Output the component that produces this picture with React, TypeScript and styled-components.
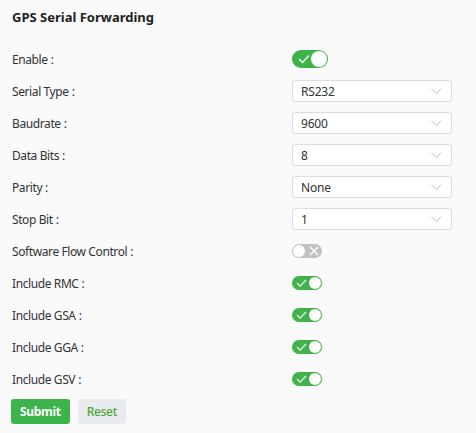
import React from "react";
import styled, { createGlobalStyle } from "styled-components";

const Global = createGlobalStyle`
  html, body { margin: 0; padding: 0; background: #fafafa; }
  body { font-family: "Noto Sans", "Noto Sans CJK SC", sans-serif; color: #333; }
`;

const Page = styled.div`
  padding: 8px 12px 10px 12px;
`;

const Title = styled.h2`
  margin: 0 0 17px 0;
  font-size: 13px;
  font-weight: 700;
  line-height: 18px;
  color: #222;
`;

const Row = styled.div`
  display: grid;
  grid-template-columns: 280px 160px;
  align-items: center;
  height: 32px;
`;

const Label = styled.div`
  font-size: 12px;
  letter-spacing: -0.4px;
  color: #333;
  white-space: nowrap;
`;

const Colon = styled.span`
  margin-left: 3px;
`;

const SelectBox = styled.div`
  box-sizing: border-box;
  height: 22px;
  border: 1px solid #dcdde3;
  border-radius: 3px;
  background: #fff;
  display: flex;
  align-items: center;
  justify-content: space-between;
  padding: 0 9px 0 8px;
  font-size: 12px;
  letter-spacing: -0.2px;
  color: #333;
`;

const Track = styled.div<{ $on: boolean; $big?: boolean }>`
  position: relative;
  box-sizing: border-box;
  width: ${(p) => (p.$big ? 36 : 30)}px;
  height: ${(p) => (p.$big ? 18 : 14)}px;
  border-radius: 9px;
  background: ${(p) => (p.$on ? "#3cb44a" : "#c2c2c2")};
`;

const Knob = styled.div<{ $on: boolean; $big?: boolean }>`
  position: absolute;
  top: 1px;
  ${(p) => (p.$on ? "right: 1px;" : "left: 1px;")}
  width: ${(p) => (p.$big ? 16 : 12)}px;
  height: ${(p) => (p.$big ? 16 : 12)}px;
  border-radius: 50%;
  background: #fff;
`;

const Mark = styled.svg<{ $on: boolean; $big?: boolean }>`
  position: absolute;
  top: 50%;
  transform: translateY(-50%);
  ${(p) => (p.$on ? `left: ${p.$big ? 6 : 4}px;` : "right: 3px;")}
`;

const Buttons = styled.div`
  display: flex;
  gap: 8px;
  margin-top: 4px;
  margin-left: -1px;
`;

const Button = styled.button<{ $primary?: boolean }>`
  height: 25px;
  padding: 0 9px;
  border: none;
  border-radius: 3px;
  font-family: inherit;
  font-size: 12px;
  letter-spacing: -0.3px;
  font-weight: 700;
  cursor: pointer;
  background: ${(p) => (p.$primary ? "#3cb44a" : "#e9ebef")};
  color: ${(p) => (p.$primary ? "#fff" : "#4aa63c")};
`;

const ResetButton = styled(Button)`
  font-weight: 500;
`;

function Toggle({ on, big }: { on: boolean; big?: boolean }) {
  return (
    <Track $on={on} $big={big}>
      {on ? (
        <Mark $on width={big ? 12 : 11} height={big ? 10 : 9} viewBox="0 0 12 10" $big={big}>
          <path d="M1 5 L4.5 8.5 L11 1.5" fill="none" stroke="#fff" strokeWidth="1.3" />
        </Mark>
      ) : (
        <Mark $on={false} width={10} height={10} viewBox="0 0 10 10">
          <path d="M1 1 L9 9 M9 1 L1 9" fill="none" stroke="#fff" strokeWidth="1.4" />
        </Mark>
      )}
      <Knob $on={on} $big={big} />
    </Track>
  );
}

function Select({ value }: { value: string }) {
  return (
    <SelectBox>
      <span>{value}</span>
      <svg width="11" height="6" viewBox="0 0 11 6">
        <path d="M0.5 0.5 L5.5 5.5 L10.5 0.5" fill="none" stroke="#c4c4c8" strokeWidth="1" />
      </svg>
    </SelectBox>
  );
}

const rows: { label: string; kind: "toggle" | "select"; value?: string; on?: boolean; big?: boolean }[] = [
  { label: "Enable", kind: "toggle", on: true, big: true },
  { label: "Serial Type", kind: "select", value: "RS232" },
  { label: "Baudrate", kind: "select", value: "9600" },
  { label: "Data Bits", kind: "select", value: "8" },
  { label: "Parity", kind: "select", value: "None" },
  { label: "Stop Bit", kind: "select", value: "1" },
  { label: "Software Flow Control", kind: "toggle", on: false },
  { label: "Include RMC", kind: "toggle", on: true },
  { label: "Include GSA", kind: "toggle", on: true },
  { label: "Include GGA", kind: "toggle", on: true },
  { label: "Include GSV", kind: "toggle", on: true },
];

export default function App() {
  return (
    <>
      <Global />
      <Page>
        <Title>GPS Serial Forwarding</Title>
        {rows.map((r) => (
          <Row key={r.label}>
            <Label>
              {r.label}
              <Colon>:</Colon>
            </Label>
            <div>
              {r.kind === "toggle" ? <Toggle on={!!r.on} big={r.big} /> : <Select value={r.value!} />}
            </div>
          </Row>
        ))}
        <Buttons>
          <Button $primary>Submit</Button>
          <ResetButton>Reset</ResetButton>
        </Buttons>
      </Page>
    </>
  );
}
